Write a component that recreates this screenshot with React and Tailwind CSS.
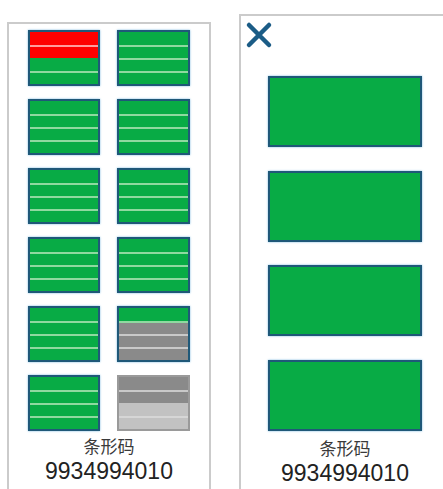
const GREEN = 'bg-[#08ab45]'
const RED = 'bg-[#fe0000]'
const GRAY = 'bg-[#8a8a8a]'
const LIGHT = 'bg-[#c2c2c2]'

const lineFor = {
  [GREEN]: 'bg-[#8fd9a0]',
  [RED]: 'bg-[#ff9c9c]',
  [GRAY]: 'bg-[#c9c9c9]',
  [LIGHT]: 'bg-[#d6d6d6]',
}

// each slot: 4 segments, lines drawn between them unless the colour changes to red/green edge
const slots = [
  [RED, RED, GREEN, GREEN], [GREEN, GREEN, GREEN, GREEN],
  [GREEN, GREEN, GREEN, GREEN], [GREEN, GREEN, GREEN, GREEN],
  [GREEN, GREEN, GREEN, GREEN], [GREEN, GREEN, GREEN, GREEN],
  [GREEN, GREEN, GREEN, GREEN], [GREEN, GREEN, GREEN, GREEN],
  [GREEN, GREEN, GREEN, GREEN], [GREEN, GRAY, GRAY, GRAY],
  [GREEN, GREEN, GREEN, GREEN], [GRAY, GRAY, LIGHT, LIGHT],
]

function Slot({ segs }) {
  const empty = segs.every(s => s !== GREEN && s !== RED)
  return (
    <div className={`h-[56px] border-2 flex flex-col ${empty ? 'border-[#9a9a9a]' : 'border-[#1f5878] shadow-[0_0_2px_#7ab8e0]'}`}>
      {segs.map((s, i) => (
        <div key={i} className="flex-1 flex flex-col">
          {i > 0 && !(s === GREEN && segs[i - 1] === RED) && !(s === LIGHT && segs[i - 1] === GRAY) && (
            <div className={`h-[2px] ${segs[i - 1] === GREEN && s === GRAY ? lineFor[GREEN] : lineFor[s]}`} />
          )}
          <div className={`flex-1 ${s}`} />
        </div>
      ))}
    </div>
  )
}

function Label() {
  return (
    <div className="flex flex-col items-center">
      <div className="text-[17px] leading-[24px] text-[#3a3a3a] font-['Noto_Sans_CJK_SC',sans-serif]">条形码</div>
      <div className="text-[23px] leading-[26px] text-[#222] font-['Liberation_Sans',Arial,sans-serif]">9934994010</div>
    </div>
  )
}

export default function App() {
  return (
    <div className="w-[443px] h-[489px] bg-white overflow-hidden flex items-start">
      <div className="shrink-0 ml-[7px] mt-[22px] w-[204px] h-[480px] border-2 border-b-0 border-[#cbcbcb] pt-[6px] pl-[19px]">
        <div className="grid grid-cols-[72px_73px] gap-x-[17px] gap-y-[13px]">
          {slots.map((s, i) => <Slot key={i} segs={s} />)}
        </div>
        <div className="w-[162px] mt-[3px]">
          <Label />
        </div>
      </div>

      <div className="shrink-0 ml-[28px] mt-[14px] w-[220px] h-[480px] border-2 border-r-0 border-b-0 border-[#cbcbcb]">
        <svg className="ml-[4px] mt-[5px]" width="28" height="28" viewBox="0 0 28 28">
          <path d="M4 4 L24 24 M24 4 L4 24" stroke="#1b5c86" strokeWidth="4.5" strokeLinecap="round" />
        </svg>
        <div className="pl-[27px] mt-[27px] w-[181px] flex flex-col gap-[23.5px]">
          {[0, 1, 2, 3].map(i => (
            <div key={i} className="h-[71px] bg-[#08ab45] border-2 border-[#1f5878] shadow-[0_0_2px_#7ab8e0]" />
          ))}
        </div>
        <div className="pl-[27px] w-[181px] mt-[5px]">
          <Label />
        </div>
      </div>
    </div>
  )
}
